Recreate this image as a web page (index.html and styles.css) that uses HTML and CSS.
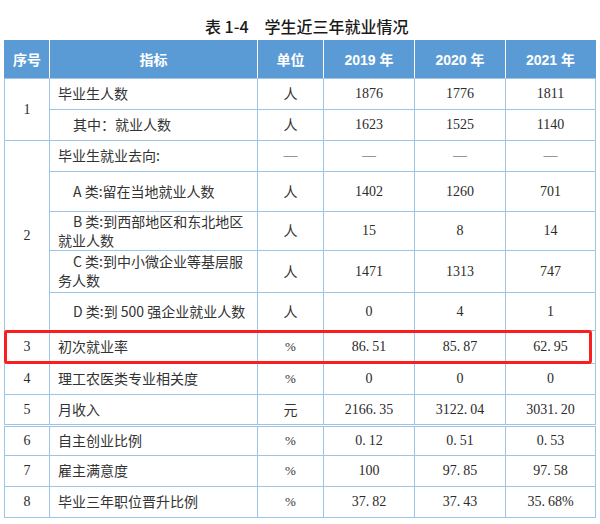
FILE: index.html
```html
<!DOCTYPE html>
<html lang="zh">
<head>
<meta charset="utf-8">
<link rel="stylesheet" href="styles.css">
</head>
<body>
<div class="page">
  <div class="title">表 1-4<span class="gap"></span>学生近三年就业情况</div>
  <div class="table-wrap">
    <table class="grid">
      <colgroup>
        <col class="c-no"><col class="c-name"><col class="c-unit"><col class="c-y"><col class="c-y"><col class="c-y3">
      </colgroup>
      <thead>
        <tr class="h-hdr">
          <th>序号</th><th>指标</th><th>单位</th><th>2019 年</th><th>2020 年</th><th>2021 年</th>
        </tr>
      </thead>
      <tbody>
        <tr class="h31">
          <td class="no" rowspan="2">1</td><td class="name">毕业生人数</td><td class="unit">人</td><td>1876</td><td>1776</td><td>1811</td>
        </tr>
        <tr class="h31">
          <td class="name ind">其中：就业人数</td><td class="unit">人</td><td>1623</td><td>1525</td><td>1140</td>
        </tr>
        <tr class="h31">
          <td class="no" rowspan="5">2</td><td class="name">毕业生就业去向:</td><td class="dash">—</td><td class="dash">—</td><td class="dash">—</td><td class="dash">—</td>
        </tr>
        <tr class="h40">
          <td class="name ind">A 类:留在当地就业人数</td><td class="unit">人</td><td>1402</td><td>1260</td><td>701</td>
        </tr>
        <tr class="h39">
          <td class="name ind wrap">B 类:到西部地区和东北地区就业人数</td><td class="unit">人</td><td>15</td><td>8</td><td>14</td>
        </tr>
        <tr class="h42">
          <td class="name ind wrap">C 类:到中小微企业等基层服务人数</td><td class="unit">人</td><td>1471</td><td>1313</td><td>747</td>
        </tr>
        <tr class="h38">
          <td class="name ind">D 类:到 500 强企业就业人数</td><td class="unit">人</td><td>0</td><td>4</td><td>1</td>
        </tr>
        <tr class="h33">
          <td class="no">3</td><td class="name">初次就业率</td><td class="unit pct">%</td><td>86<span class="dp">.</span>51</td><td>85<span class="dp">.</span>87</td><td>62<span class="dp">.</span>95</td>
        </tr>
        <tr class="h31">
          <td class="no">4</td><td class="name">理工农医类专业相关度</td><td class="unit pct">%</td><td>0</td><td>0</td><td>0</td>
        </tr>
        <tr class="h31 dbl">
          <td class="no">5</td><td class="name">月收入</td><td class="unit">元</td><td>2166<span class="dp">.</span>35</td><td>3122<span class="dp">.</span>04</td><td>3031<span class="dp">.</span>20</td>
        </tr>
        <tr class="h30">
          <td class="no">6</td><td class="name">自主创业比例</td><td class="unit pct">%</td><td>0<span class="dp">.</span>12</td><td>0<span class="dp">.</span>51</td><td>0<span class="dp">.</span>53</td>
        </tr>
        <tr class="h31">
          <td class="no">7</td><td class="name">雇主满意度</td><td class="unit pct">%</td><td>100</td><td>97<span class="dp">.</span>85</td><td>97<span class="dp">.</span>58</td>
        </tr>
        <tr class="h31">
          <td class="no">8</td><td class="name">毕业三年职位晋升比例</td><td class="unit pct">%</td><td>37<span class="dp">.</span>82</td><td>37<span class="dp">.</span>43</td><td>35<span class="dp">.</span>68%</td>
        </tr>
      </tbody>
    </table>
    <div class="highlight"></div>
  </div>
</div>
</body>
</html>
```

FILE: styles.css
```css
* { box-sizing: border-box; }
html, body { margin: 0; padding: 0; background: #ffffff; }
body {
  font-family: "Liberation Serif", "Noto Sans CJK SC", serif;
  color: #2b2b2b;
}
.page {
  width: 600px;
  padding: 0 0 0 4px;
}
.title {
  height: 40px;
  padding: 17px 0 0 201px;
  font-family: "Noto Sans CJK SC", sans-serif;
  font-size: 16px;
  line-height: 18px;
  font-weight: 500;
  color: #1a1a1a;
  white-space: nowrap;
}
.title .gap { display: inline-block; width: 16px; }
.table-wrap { position: relative; width: 591px; }
.grid {
  width: 591px;
  border-collapse: collapse;
  table-layout: fixed;
}
.c-no { width: 45px; }
.c-name { width: 208px; }
.c-unit { width: 66px; }
.c-y { width: 91px; }
.c-y3 { width: 90px; }
.grid th {
  background: #5b9bd5;
  color: #ffffff;
  font-family: "Liberation Sans", "Noto Sans CJK SC", sans-serif;
  font-weight: bold;
  font-size: 14px;
  height: 38px;
  padding: 0;
  border-left: 1px solid #ffffff;
  border-right: 1px solid #ffffff;
  border-bottom: 1px solid #9dc3e6;
}
.grid th:first-child { border-left: 1px solid #5b9bd5; }
.grid th:last-child { border-right: 1px solid #5b9bd5; }
.grid td {
  border: 1px solid #9dc3e6;
  padding: 0;
  text-align: center;
  vertical-align: middle;
  font-size: 14px;
  line-height: 19px;
}
.grid td.name {
  text-align: left;
  padding: 0 4px 0 8px;
  font-family: "Noto Sans CJK SC", sans-serif;
  color: #333333;
}
.grid td.ind { text-indent: 15px; }
.grid td.unit { font-family: "Noto Sans CJK SC", sans-serif; color: #333333; }
.grid td.pct { font-family: "Liberation Serif", serif; font-size: 13px; }
.grid td.dash { color: #444444; }
.dp { margin-right: 3px; }
.h31 td { height: 31px; }
.h30 td { height: 30px; }
.h33 td { height: 33px; }
.h38 td { height: 38px; }
.h39 td { height: 39px; }
.h40 td { height: 40px; }
.h42 td { height: 42px; }
.grid tr.dbl td { border-bottom: 3px double #9dc3e6; }
.highlight {
  position: absolute;
  left: 0;
  top: 290px;
  width: 588px;
  height: 34px;
  border: 3px solid #fa1e1e;
  border-radius: 3px;
  pointer-events: none;
}
```
